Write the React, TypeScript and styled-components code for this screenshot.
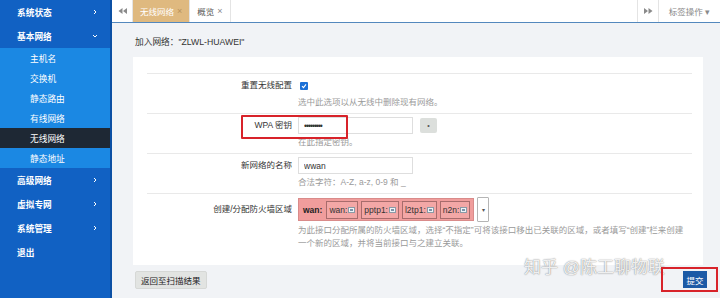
import styled, { createGlobalStyle } from 'styled-components';

const GlobalStyle = createGlobalStyle`
  html, body {
    margin: 0;
    padding: 0;
  }
  body {
    font-family: 'Liberation Sans', 'Noto Sans CJK SC', sans-serif;
    background: #f1f3f6;
  }
  #root {
    width: 720px;
    height: 298px;
    overflow: hidden;
  }
  * {
    box-sizing: border-box;
  }
`;

interface IMenu {
  label: string;
  open?: boolean;
  children?: string[];
}

const menus: IMenu[] = [
  { label: '系统状态' },
  {
    label: '基本网络',
    open: true,
    children: ['主机名', '交换机', '静态路由', '有线网络', '无线网络', '静态地址'],
  },
  { label: '高级网络' },
  { label: '虚拟专网' },
  { label: '系统管理' },
  { label: '退出' },
];

const zones = ['wan:', 'pptp1:', 'l2tp1:', 'n2n:'];

function Chevron({ down }: { down?: boolean }) {
  return (
    <svg width="6" height="6" viewBox="0 0 6 6">
      <path
        d={down ? 'M1 2 L3 4 L5 2' : 'M2 1 L4 3 L2 5'}
        fill="none"
        stroke="#fff"
        strokeWidth="1"
      />
    </svg>
  );
}

function DoubleArrow({ right }: { right?: boolean }) {
  return (
    <svg width="9" height="6" viewBox="0 0 9 6">
      {right ? (
        <path d="M0 0 L4 3 L0 6 Z M4.5 0 L8.5 3 L4.5 6 Z" fill="#8a8a8a" />
      ) : (
        <path d="M4.5 0 L0.5 3 L4.5 6 Z M9 0 L5 3 L9 6 Z" fill="#8a8a8a" />
      )}
    </svg>
  );
}

function ZoneIcon() {
  return (
    <svg width="7" height="6" viewBox="0 0 7 6">
      <rect x="0.5" y="0.5" width="6" height="5" fill="#eef3f6" stroke="#8a9aa6" />
      <rect x="2" y="2" width="3" height="2" fill="#7c93a8" />
    </svg>
  );
}

export default function App() {
  return (
    <Page>
      <GlobalStyle />
      <Sidebar>
        {menus.map((m) => (
          <div key={m.label}>
            <MenuItem>
              <span>{m.label}</span>
              {m.label !== '退出' && <Chevron down={m.open} />}
            </MenuItem>
            {m.children && (
              <SubMenu>
                {m.children.map((c) => (
                  <SubItem key={c} $active={c === '无线网络'}>
                    {c}
                  </SubItem>
                ))}
              </SubMenu>
            )}
          </div>
        ))}
      </Sidebar>
      <Main>
        <TabBar>
          <NavBtn>
            <DoubleArrow />
          </NavBtn>
          <Tab $active>
            无线网络 <TabClose $active>×</TabClose>
          </Tab>
          <Tab>
            概览 <TabClose>×</TabClose>
          </Tab>
          <TabSpacer />
          <NavBtn $left>
            <DoubleArrow right />
          </NavBtn>
          <TabMenu>标签操作 ▾</TabMenu>
        </TabBar>
        <Content>
          <Title>加入网络："ZLWL-HUAWEI"</Title>
          <Panel>
            <Row>
              <Label>重置无线配置</Label>
              <Field>
                <FieldLine>
                  <Check>
                    <svg width="6" height="6" viewBox="0 0 6 6">
                      <path d="M1 3.2 L2.5 4.6 L5 1.4" fill="none" stroke="#fff" strokeWidth="1.1" />
                    </svg>
                  </Check>
                </FieldLine>
                <Desc>选中此选项以从无线中删除现有网络。</Desc>
              </Field>
            </Row>
            <Row>
              <Label>WPA 密钥</Label>
              <Field>
                <FieldLine>
                  <TextInput type="password" value="123456789" readOnly />
                  <RevealBtn>•</RevealBtn>
                </FieldLine>
                <Desc>在此指定密钥。</Desc>
              </Field>
              <Highlight />
            </Row>
            <Row>
              <Label>新网络的名称</Label>
              <Field>
                <FieldLine>
                  <TextInput type="text" value="wwan" readOnly />
                </FieldLine>
                <Desc>合法字符：A-Z, a-z, 0-9 和 _</Desc>
              </Field>
            </Row>
            <Row $tall>
              <Label $zone>创建/分配防火墙区域</Label>
              <Field>
                <FieldLine>
                  <ZoneSelect>
                    <ZoneName>wan:</ZoneName>
                    {zones.map((z) => (
                      <ZoneChip key={z}>
                        {z}
                        <ZoneIcon />
                      </ZoneChip>
                    ))}
                  </ZoneSelect>
                  <ZoneDrop>▾</ZoneDrop>
                </FieldLine>
                <Desc $lines>
                  <span>为此接口分配所属的防火墙区域，选择“不指定”可将该接口移出已关联的区域，或者填写“创建”栏来创建</span>
                  <span>一个新的区域，并将当前接口与之建立关联。</span>
                </Desc>
              </Field>
            </Row>
          </Panel>
          <BackBtn>返回至扫描结果</BackBtn>
          <Watermark>知乎 @陈工聊物联</Watermark>
          <SubmitWrap>
            <SubmitBtn>提交</SubmitBtn>
          </SubmitWrap>
        </Content>
      </Main>
    </Page>
  );
}

const Page = styled.div`
  display: flex;
  width: 720px;
  height: 298px;
`;

const Sidebar = styled.div`
  width: 112px;
  flex-shrink: 0;
  background: #1161c3;
  border-right: 2px solid #0c50a4;
`;

const MenuItem = styled.div`
  height: 24px;
  display: flex;
  align-items: center;
  justify-content: space-between;
  padding: 0 12px 0 17px;
  color: #fff;
  font-size: 8.7px;
  font-weight: 700;
`;

const SubMenu = styled.div`
  background: #1b88e3;
`;

const SubItem = styled.div<{ $active?: boolean }>`
  height: 20px;
  display: flex;
  align-items: center;
  padding-left: 30px;
  color: #fff;
  font-size: 8.7px;
  background: ${(p) => (p.$active ? '#1e2834' : 'transparent')};
`;

const Main = styled.div`
  flex: 1;
  display: flex;
  flex-direction: column;
  min-width: 0;
`;

const TabBar = styled.div`
  height: 23px;
  flex-shrink: 0;
  display: flex;
  align-items: stretch;
  background: #fff;
  border-bottom: 1px solid #5388bd;
`;

const NavBtn = styled.div<{ $left?: boolean }>`
  width: 21px;
  display: flex;
  align-items: center;
  justify-content: center;
  border-right: ${(p) => (p.$left ? 'none' : '1px solid #e4e4e4')};
  border-left: ${(p) => (p.$left ? '1px solid #e4e4e4' : 'none')};
`;

const Tab = styled.div<{ $active?: boolean }>`
  display: flex;
  align-items: center;
  gap: 3px;
  padding: 0 7px;
  font-size: 8.5px;
  color: ${(p) => (p.$active ? '#fff' : '#555')};
  background: ${(p) => (p.$active ? '#dfb97f' : '#fff')};
  border-right: 1px solid #e4e4e4;
`;

const TabClose = styled.span<{ $active?: boolean }>`
  font-size: 9px;
  color: ${(p) => (p.$active ? '#b8925a' : '#888')};
`;

const TabSpacer = styled.div`
  flex: 1;
`;

const TabMenu = styled.div`
  width: 62px;
  display: flex;
  align-items: center;
  justify-content: center;
  font-size: 8.5px;
  color: #8a8a8a;
  border-left: 1px solid #e4e4e4;
`;

const Content = styled.div`
  flex: 1;
  position: relative;
  padding: 13px 17px 0 21px;
  background: #f1f3f6;
`;

const Title = styled.div`
  font-size: 8.7px;
  line-height: 12px;
  color: #333;
  padding-left: 2px;
`;

const Panel = styled.div`
  margin-top: 9px;
  width: 570px;
  height: 208px;
  background: #fff;
  padding: 16px 11px 0 14px;
`;

const Row = styled.div<{ $tall?: boolean }>`
  position: relative;
  display: grid;
  grid-template-columns: 145px 1fr;
  column-gap: 6px;
  height: ${(p) => (p.$tall ? 'auto' : '40px')};
  padding-top: 3px;
  border-top: 1px solid #e9e9e9;
`;

const Label = styled.div<{ $zone?: boolean }>`
  text-align: right;
  font-size: 8.5px;
  line-height: ${(p) => (p.$zone ? '24px' : '17px')};
  color: #333;
`;

const Field = styled.div`
  display: flex;
  flex-direction: column;
`;

const FieldLine = styled.div`
  display: flex;
  align-items: center;
  min-height: 17px;
`;

const Check = styled.span`
  width: 8px;
  height: 8px;
  margin-left: 2px;
  border-radius: 1px;
  background: #1a6fd6;
  display: flex;
  align-items: center;
  justify-content: center;
`;

const Desc = styled.div<{ $lines?: boolean }>`
  margin-top: 2px;
  font-size: 8.5px;
  line-height: 13px;
  color: #9a9a9a;
  display: flex;
  flex-direction: column;
  white-space: nowrap;
`;

const TextInput = styled.input`
  width: 115px;
  height: 17px;
  border: 1px solid #dedede;
  padding: 0 5px;
  font-family: 'Liberation Sans', sans-serif;
  font-size: 8.5px;
  color: #333;
  outline: none;
  letter-spacing: ${(p) => (p.type === 'password' ? '-1px' : '0')};
`;

const RevealBtn = styled.div`
  width: 17px;
  height: 15px;
  margin-left: 7px;
  border-radius: 2px;
  background: #dcdfdc;
  font-size: 7px;
  color: #555;
  display: flex;
  align-items: center;
  justify-content: center;
`;

const Highlight = styled.div`
  position: absolute;
  left: 94px;
  top: 1px;
  width: 107px;
  height: 24px;
  border: 2px solid #d8232a;
  border-radius: 1px;
`;

const ZoneSelect = styled.div`
  display: flex;
  align-items: center;
  gap: 3px;
  height: 23px;
  padding: 0 3px 0 4px;
  background: #f09d9c;
  border: 1px solid #d98b8a;
`;

const ZoneName = styled.b`
  font-size: 8.5px;
  color: #222;
  margin-right: 1px;
`;

const ZoneChip = styled.span`
  display: flex;
  align-items: center;
  gap: 1px;
  height: 18px;
  padding: 0 2px;
  border: 1px solid #a86c6c;
  background: #f3a7a6;
  font-size: 8.5px;
  color: #333;
`;

const ZoneDrop = styled.div`
  width: 12px;
  height: 25px;
  margin-left: 3px;
  border: 1px solid #b5b5b5;
  border-radius: 1px;
  background: #fff;
  font-size: 6px;
  color: #555;
  display: flex;
  align-items: center;
  justify-content: center;
`;

const BackBtn = styled.div`
  display: inline-flex;
  align-items: center;
  margin: 6px 0 0 2px;
  height: 18px;
  padding: 0 5px;
  background: #e2e4e2;
  border: 1px solid #d6d8d6;
  border-radius: 2px;
  font-size: 8.5px;
  color: #222;
`;

const Watermark = styled.div`
  position: absolute;
  right: 55px;
  bottom: 20px;
  font-size: 17px;
  line-height: 20px;
  color: rgba(255, 255, 255, 0.9);
  text-shadow: 0 0 1px rgba(0, 0, 0, 0.45), 0 0 2px rgba(0, 0, 0, 0.2);
  white-space: nowrap;
`;

const SubmitWrap = styled.div`
  position: absolute;
  right: 2px;
  bottom: 6px;
  width: 57px;
  height: 25px;
  border: 2px solid #d8232a;
  display: flex;
  align-items: center;
  justify-content: flex-end;
  padding-right: 9px;
`;

const SubmitBtn = styled.div`
  width: 24px;
  height: 17px;
  background: #1c5aa6;
  color: #fff;
  font-size: 8.5px;
  display: flex;
  align-items: center;
  justify-content: center;
`;
